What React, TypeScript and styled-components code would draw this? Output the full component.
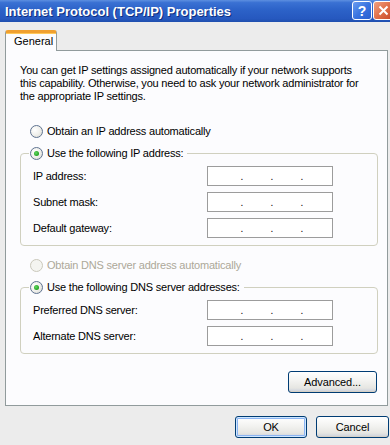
import React from "react";
import styled, { createGlobalStyle } from "styled-components";

const GlobalStyle = createGlobalStyle`
  html, body { margin: 0; padding: 0; background: #ececec; }
  body { font-family: "Liberation Sans", Arial, sans-serif; font-size: 11px; color: #000; letter-spacing: -0.2px; }
  * { box-sizing: border-box; }
`;

const Window = styled.div`
  width: 390px;
  height: 445px;
  overflow: hidden;
  background: #ececec;
  display: flex;
  flex-direction: column;
`;

const TitleBar = styled.div`
  height: 22px;
  flex: none;
  display: flex;
  align-items: center;
  padding-left: 5px;
  background: linear-gradient(to bottom, #5d8fe0 0%, #3a71d3 12%, #2c62c8 45%, #2658bf 85%, #1f4fae 100%);
`;

const TitleText = styled.div`
  flex: 1;
  color: #fff;
  font-weight: bold;
  font-size: 13px;
  letter-spacing: 0;
  text-shadow: 1px 1px 0 #0f2f80;
  white-space: nowrap;
`;

const CaptionButtons = styled.div`
  display: flex;
  gap: 1px;
  align-self: flex-start;
  margin-top: 1px;
  margin-right: -3px;
`;

const CaptionButton = styled.div<{ $variant: "help" | "close" }>`
  width: 20px;
  height: 19px;
  border: 1px solid #fff;
  border-radius: 3px;
  display: flex;
  align-items: center;
  justify-content: center;
  color: #fff;
  font-weight: bold;
  font-size: 14px;
  letter-spacing: 0;
  background: ${(p) =>
    p.$variant === "help"
      ? "linear-gradient(135deg, #6a9df0 0%, #3a74e0 50%, #2a5fd0 100%)"
      : "linear-gradient(135deg, #f0a080 0%, #e0704a 50%, #c8492a 100%)"};
`;

const Body = styled.div`
  flex: 1;
  display: flex;
  flex-direction: column;
  padding: 8px 0 0 5px;
`;

const TabStrip = styled.div`
  display: flex;
  height: 20px;
  position: relative;
  z-index: 1;
`;

const Tab = styled.div`
  width: 52px;
  height: 21px;
  background: #fcfcfe;
  border: 1px solid #919b9c;
  border-bottom: none;
  border-top: 3px solid #f0a030;
  border-radius: 3px 3px 0 0;
  padding-left: 8px;
  padding-top: 2px;
  font-size: 11px;
  letter-spacing: 0;
  box-shadow: inset 0 1px 0 #ffc85a;
`;

const Panel = styled.div`
  width: 383px;
  background: #fcfcfe;
  border: 1px solid #919b9c;
  padding: 0 10px 12px 14px;
  display: flex;
  flex-direction: column;
`;

const Intro = styled.p`
  margin: 13px 0 0 0;
  line-height: 13px;
  font-size: 11px;
  width: 349px;
`;

const RadioRow = styled.label<{ $disabled?: boolean; $legend?: boolean; $mt?: number }>`
  display: flex;
  align-items: center;
  height: 16px;
  gap: 4px;
  color: ${(p) => (p.$disabled ? "#aca899" : "#000")};
  margin-left: ${(p) => (p.$legend ? "-4px" : "10px")};
  margin-top: ${(p) => (p.$legend ? -9 : p.$mt ?? 20)}px;
  width: fit-content;
  padding: ${(p) => (p.$legend ? "0 4px 0 1px" : "0")};
  background: #fcfcfe;
`;

const RadioCircle = styled.span<{ $checked?: boolean; $disabled?: boolean }>`
  width: 13px;
  height: 13px;
  border-radius: 50%;
  border: 1px solid ${(p) => (p.$disabled ? "#cac8bb" : "#5f7391")};
  background: ${(p) =>
    p.$disabled
      ? "#f4f4f0"
      : "radial-gradient(circle at 35% 35%, #ffffff 0%, #f0f0ec 50%, #d6d6cf 100%)"};
  display: flex;
  align-items: center;
  justify-content: center;
  flex: none;
  &::after {
    content: "";
    display: ${(p) => (p.$checked ? "block" : "none")};
    width: 5px;
    height: 5px;
    border-radius: 50%;
    background: radial-gradient(circle at 40% 40%, #62d862 0%, #21a121 70%, #1a8a1a 100%);
  }
`;

const GroupBox = styled.div<{ $mt: number }>`
  margin-top: ${(p) => p.$mt}px;
  width: 358px;
  border: 1px solid #d0d0bf;
  border-radius: 4px;
  padding: 0 12px 7px 12px;
  display: flex;
  flex-direction: column;
`;

const Fields = styled.div`
  display: flex;
  flex-direction: column;
  gap: 6px;
  margin-top: 5px;
`;

const FieldRow = styled.div`
  display: flex;
  align-items: center;
  justify-content: space-between;
  height: 20px;
`;

const FieldLabel = styled.span`
  font-size: 11px;
`;

const IpBox = styled.div`
  width: 126px;
  height: 20px;
  border: 1px solid #9c9c9c;
  background: #fff;
  display: flex;
  align-items: flex-end;
  padding-bottom: 4px;
  margin-right: 32px;
`;

const Dot = styled.span<{ $w: number }>`
  width: ${(p) => p.$w}px;
  text-align: right;
  line-height: 8px;
  font-size: 10px;
  color: #000;
`;

const ActionRow = styled.div`
  display: flex;
  justify-content: flex-end;
  margin-top: 17px;
`;

const Button = styled.button<{ $default?: boolean; $w: number }>`
  width: ${(p) => p.$w}px;
  height: 22px;
  border: 1px solid #003c74;
  border-radius: 3px;
  font-family: "Liberation Sans", Arial, sans-serif;
  font-size: 11px;
  letter-spacing: -0.1px;
  color: #000;
  padding: 0;
  background: linear-gradient(to bottom, #ffffff 0%, #f4f4f2 40%, #e6e6e2 80%, #c9cfdc 100%);
  box-shadow: ${(p) =>
    p.$default
      ? "inset 0 0 0 1px #cee7ff, inset 0 0 0 2px #8cb4f2"
      : "inset 0 -1px 0 #d6d0c5"};
`;

const Footer = styled.div`
  display: flex;
  justify-content: flex-end;
  gap: 9px;
  margin-top: 10px;
  padding-right: 1px;
`;

function IpField({ label }: { label: string }) {
  return (
    <FieldRow>
      <FieldLabel>{label}</FieldLabel>
      <IpBox>
        <Dot $w={35}>.</Dot>
        <Dot $w={30}>.</Dot>
        <Dot $w={30}>.</Dot>
      </IpBox>
    </FieldRow>
  );
}

export default function App() {
  return (
    <>
      <GlobalStyle />
      <Window>
        <TitleBar>
          <TitleText>Internet Protocol (TCP/IP) Properties</TitleText>
          <CaptionButtons>
            <CaptionButton $variant="help">?</CaptionButton>
            <CaptionButton $variant="close">
              <svg width="11" height="11" viewBox="0 0 11 11">
                <path d="M1.5 1.5 L9.5 9.5 M9.5 1.5 L1.5 9.5" stroke="#fff" strokeWidth="2" />
              </svg>
            </CaptionButton>
          </CaptionButtons>
        </TitleBar>
        <Body>
          <TabStrip>
            <Tab>General</Tab>
          </TabStrip>
          <Panel>
            <Intro>
              You can get IP settings assigned automatically if your network supports
              this capability. Otherwise, you need to ask your network administrator for
              the appropriate IP settings.
            </Intro>
            <RadioRow>
              <RadioCircle />
              Obtain an IP address automatically
            </RadioRow>
            <GroupBox $mt={14}>
              <RadioRow $legend>
                <RadioCircle $checked />
                Use the following IP address:
              </RadioRow>
              <Fields>
                <IpField label="IP address:" />
                <IpField label="Subnet mask:" />
                <IpField label="Default gateway:" />
              </Fields>
            </GroupBox>
            <RadioRow $disabled $mt={11}>
              <RadioCircle $disabled />
              Obtain DNS server address automatically
            </RadioRow>
            <GroupBox $mt={14}>
              <RadioRow $legend>
                <RadioCircle $checked />
                Use the following DNS server addresses:
              </RadioRow>
              <Fields>
                <IpField label="Preferred DNS server:" />
                <IpField label="Alternate DNS server:" />
              </Fields>
            </GroupBox>
            <ActionRow>
              <Button $w={89}>Advanced...</Button>
            </ActionRow>
          </Panel>
          <Footer>
            <Button $default $w={72}>OK</Button>
            <Button $w={73}>Cancel</Button>
          </Footer>
        </Body>
      </Window>
    </>
  );
}
